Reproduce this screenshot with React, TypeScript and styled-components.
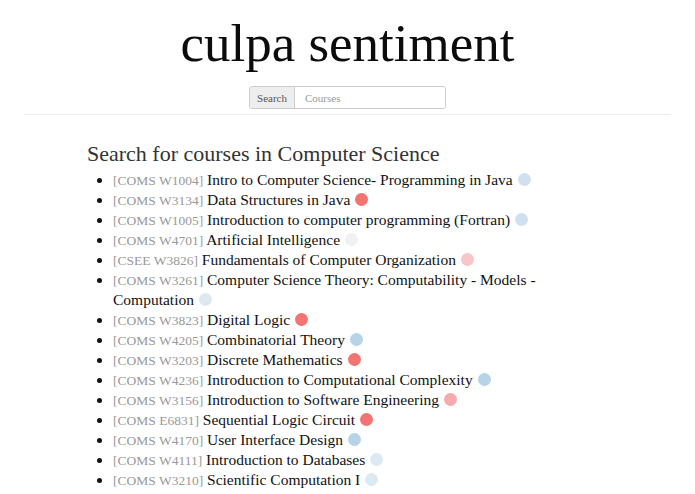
import styled, { createGlobalStyle } from "styled-components";

const GlobalStyle = createGlobalStyle`
	body {
		margin: 0;
		background: #ffffff;
		font-family: Georgia, "Liberation Serif", serif;
		color: #111111;
	}
`;

const Page = styled.div`
	width: 695px;
	min-height: 494px;
`;

const Header = styled.header`
	display: flex;
	flex-direction: column;
	align-items: center;
	padding-top: 10px;
	margin: 0 24px;
	border-bottom: 1px solid #eeeeee;
	padding-bottom: 5px;
`;

const Title = styled.h1`
	margin: 0;
	font-size: 53px;
	font-weight: normal;
	line-height: 66px;
	color: #0c0c0c;
`;

const SearchGroup = styled.div`
	display: flex;
	margin-top: 10px;
	height: 23px;
	border: 1px solid #cccccc;
	border-radius: 3px;
	box-sizing: border-box;
	overflow: hidden;
`;

const SearchAddon = styled.span`
	display: flex;
	align-items: center;
	padding: 0 7px;
	background: #eeeeee;
	border-right: 1px solid #cccccc;
	font-size: 11px;
	color: #555555;
`;

const SearchInput = styled.input`
	width: 130px;
	border: none;
	outline: none;
	padding: 0 10px;
	font-family: inherit;
	font-size: 11px;
	&::placeholder {
		color: #999999;
	}
`;

const Main = styled.main`
	padding: 27px 0 0 87px;
`;

const Heading = styled.h2`
	margin: 0;
	font-size: 22px;
	font-weight: normal;
	line-height: 24px;
	color: #333333;
`;

const CourseList = styled.ul`
	margin: 4px 0 0;
	padding-left: 26px;
	width: 428px;
`;

const CourseItem = styled.li`
	font-size: 15.5px;
	line-height: 20px;
	color: #111111;
`;

const Code = styled.span`
	font-size: 13.5px;
	line-height: 10px;
	color: #999999;
`;

const Dot = styled.span<{ $tone: string }>`
	display: inline-block;
	width: 13px;
	height: 13px;
	border-radius: 50%;
	margin-left: 5px;
	vertical-align: -1px;
	background: ${({ $tone }) => $tone};
`;

const tones = {
	red: "#f47373",
	pink: "#f8c5c8",
	rose: "#f6aaae",
	blue: "#b6d3e8",
	sky: "#cfe1ee",
	pale: "#dde9f1",
	grey: "#f1f1f1",
};

const courses: [string, string, string][] = [
	["COMS W1004", "Intro to Computer Science- Programming in Java", tones.sky],
	["COMS W3134", "Data Structures in Java", tones.red],
	["COMS W1005", "Introduction to computer programming (Fortran)", tones.sky],
	["COMS W4701", "Artificial Intelligence", tones.grey],
	["CSEE W3826", "Fundamentals of Computer Organization", tones.pink],
	["COMS W3261", "Computer Science Theory: Computability - Models - Computation", tones.pale],
	["COMS W3823", "Digital Logic", tones.red],
	["COMS W4205", "Combinatorial Theory", tones.blue],
	["COMS W3203", "Discrete Mathematics", tones.red],
	["COMS W4236", "Introduction to Computational Complexity", tones.blue],
	["COMS W3156", "Introduction to Software Engineering", tones.rose],
	["COMS E6831", "Sequential Logic Circuit", tones.red],
	["COMS W4170", "User Interface Design", tones.blue],
	["COMS W4111", "Introduction to Databases", tones.pale],
	["COMS W3210", "Scientific Computation I", tones.pale],
];

const App = () => (
	<Page>
		<GlobalStyle />
		<Header>
			<Title>culpa sentiment</Title>
			<SearchGroup>
				<SearchAddon>Search</SearchAddon>
				<SearchInput placeholder="Courses" />
			</SearchGroup>
		</Header>
		<Main>
			<Heading>Search for courses in Computer Science</Heading>
			<CourseList>
				{courses.map(([code, name, tone]) => (
					<CourseItem key={code}>
						<Code>[{code}]</Code> {name}
						<Dot $tone={tone} />
					</CourseItem>
				))}
			</CourseList>
		</Main>
	</Page>
);

export default App;
